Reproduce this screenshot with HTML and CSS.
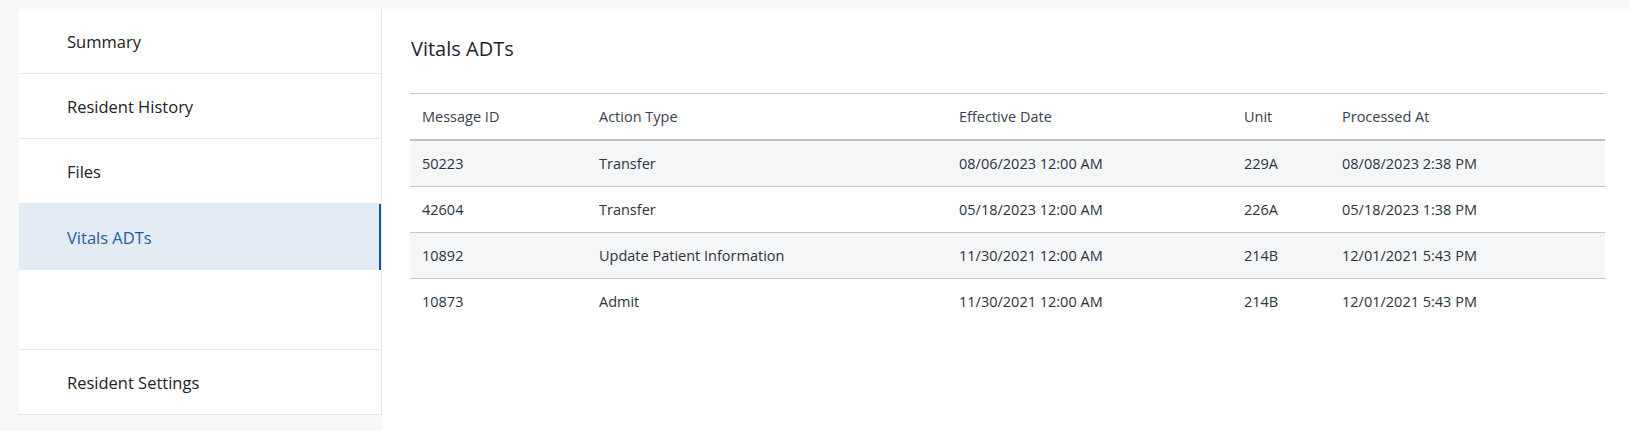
FILE: index.html
```html
<!DOCTYPE html>
<html lang="en">

<head>
    <meta charset="UTF-8">
    <meta name="viewport" content="width=device-width, initial-scale=1.0">
    <title>Vitals ADTs</title>
    <link rel="stylesheet" href="styles.css">
</head>

<body>
    <div class="layout">
        <nav class="side-nav">
            <a class="nav-item" href="#">Summary</a>
            <a class="nav-item" href="#">Resident History</a>
            <a class="nav-item" href="#">Files</a>
            <a class="nav-item active" href="#">Vitals ADTs</a>
            <div class="nav-spacer"></div>
            <a class="nav-item" href="#">Resident Settings</a>
        </nav>

        <main class="content">
            <h2 class="title">Vitals ADTs</h2>
            <table class="adt-table">
                <colgroup>
                    <col class="col-id">
                    <col class="col-action">
                    <col class="col-date">
                    <col class="col-unit">
                    <col class="col-processed">
                </colgroup>
                <thead>
                    <tr>
                        <th>Message ID</th>
                        <th>Action Type</th>
                        <th>Effective Date</th>
                        <th>Unit</th>
                        <th>Processed At</th>
                    </tr>
                </thead>
                <tbody>
                    <tr>
                        <td>50223</td>
                        <td>Transfer</td>
                        <td>08/06/2023 12:00 AM</td>
                        <td>229A</td>
                        <td>08/08/2023 2:38 PM</td>
                    </tr>
                    <tr>
                        <td>42604</td>
                        <td>Transfer</td>
                        <td>05/18/2023 12:00 AM</td>
                        <td>226A</td>
                        <td>05/18/2023 1:38 PM</td>
                    </tr>
                    <tr>
                        <td>10892</td>
                        <td>Update Patient Information</td>
                        <td>11/30/2021 12:00 AM</td>
                        <td>214B</td>
                        <td>12/01/2021 5:43 PM</td>
                    </tr>
                    <tr>
                        <td>10873</td>
                        <td>Admit</td>
                        <td>11/30/2021 12:00 AM</td>
                        <td>214B</td>
                        <td>12/01/2021 5:43 PM</td>
                    </tr>
                </tbody>
            </table>
        </main>
    </div>
</body>

</html>
```

FILE: styles.css
```css
body {
    margin: 0;
    background: #f8f8f8;
    font-family: "Open Sans", "Noto Sans", sans-serif;
    color: #222;
}

.layout {
    display: flex;
    align-items: flex-start;
    height: 431px;
    padding: 9px 0 0 19px;
    box-sizing: border-box;
}

.side-nav {
    display: flex;
    flex-direction: column;
    width: 363px;
    flex-shrink: 0;
    background: #fff;
    border-right: 1px solid #e6e6ea;
    box-sizing: border-box;
}

.nav-item {
    display: flex;
    align-items: center;
    height: 65px;
    padding-left: 48px;
    border-bottom: 1px solid #e7e8ec;
    box-sizing: border-box;
    font-size: 16.5px;
    color: #222;
    text-decoration: none;
}

.nav-item.active {
    height: 66px;
    color: #1c5f9e;
    background: #e3ebf4;
    border-bottom: none;
    box-shadow: inset -2px 0 0 #0b58a3;
}

.nav-spacer {
    height: 80px;
    border-bottom: 1px solid #e7e8ec;
    box-sizing: border-box;
}

.content {
    flex: 1;
    align-self: stretch;
    background: #fff;
    padding: 0 25px 0 28px;
}

.title {
    margin: 27px 0 31px 1px;
    font-size: 20px;
    font-weight: 400;
    line-height: 26px;
    color: #1f2430;
}

.adt-table {
    width: 100%;
    border-collapse: collapse;
    font-size: 14.5px;
    color: #2b3340;
}

.col-id { width: 177px; }
.col-action { width: 360px; }
.col-date { width: 285px; }
.col-unit { width: 98px; }

.adt-table th,
.adt-table td {
    height: 45px;
    padding: 0 12px;
    text-align: left;
    font-weight: 400;
}

.adt-table thead tr {
    border-top: 1px solid #c3c4d2;
    border-bottom: 2px solid #bdbfcf;
}

.adt-table th {
    color: #3a4150;
}

.adt-table tbody tr {
    border-bottom: 1px solid #c6c7d4;
}

.adt-table tbody tr:nth-child(odd) {
    background: #f5f6f8;
}

.adt-table tbody tr:last-child {
    border-bottom: none;
}
```
